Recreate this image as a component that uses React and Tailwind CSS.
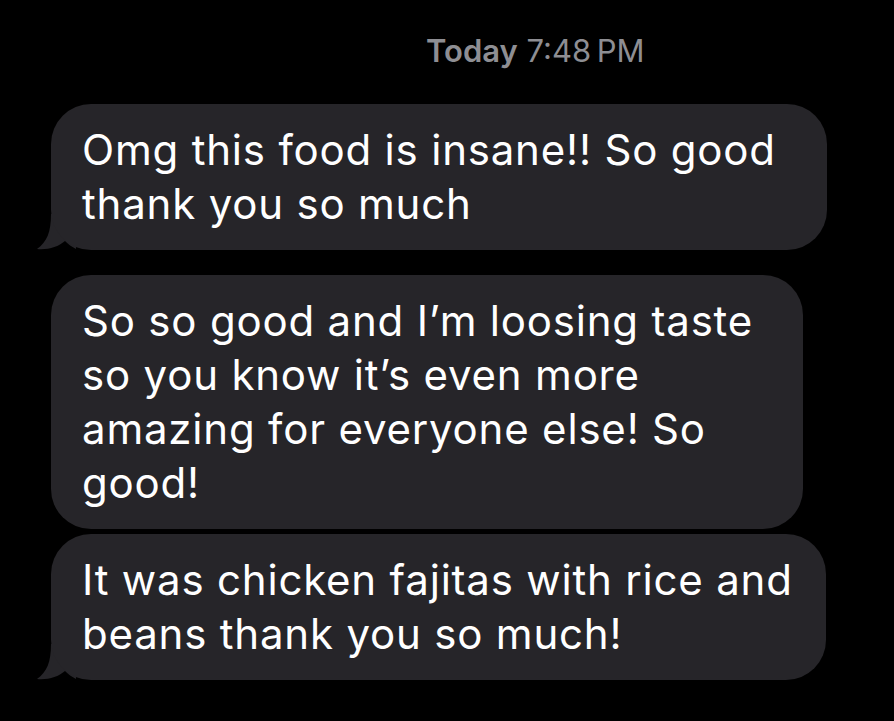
import React from "react";

const Tail = () => (
  <svg
    className="absolute left-[-15px] bottom-0"
    width="40"
    height="36"
    viewBox="0 0 40 36"
  >
    <path
      d="M15 0 C15 18 11 28 1 35 C12 36 22 33 29 27 C32 30 36 33 40 35 L40 0 Z"
      fill="#262529"
    />
  </svg>
);

const Bubble = ({ lines, width, tail }) => (
  <div className={`relative ${width}`}>
    <div className="relative z-10 rounded-[40px] bg-[#262529] pl-[31px] pr-6 pt-[19px] pb-[19px]">
      {lines.map((line, i) => (
        <p key={i} className="text-[42px] leading-[54px] text-white tracking-[0.8px] whitespace-nowrap">
          {line}
        </p>
      ))}
    </div>
    {tail && <Tail />}
  </div>
);

export default function App() {
  return (
    <div className="w-[894px] h-[721px] bg-black font-['Inter','Liberation_Sans',sans-serif] overflow-hidden">
      <div className="pl-[426px] pt-[32px] text-[31px] text-[#8e8e93] leading-[38px]">
        <span className="font-semibold">Today</span> 7:48&thinsp;PM
      </div>
      <div className="pl-[51px] pt-[34px] flex flex-col">
        <Bubble
          width="w-[776px]"
          tail
          lines={["Omg this food is insane!! So good", "thank you so much"]}
        />
        <div className="h-[25px]" />
        <Bubble
          width="w-[752px]"
          lines={[
            "So so good and I\u2019m loosing taste",
            "so you know it\u2019s even more",
            "amazing for everyone else! So",
            "good!",
          ]}
        />
        <div className="h-[5px]" />
        <Bubble
          width="w-[775px]"
          tail
          lines={["It was chicken fajitas with rice and", "beans thank you so much!"]}
        />
      </div>
    </div>
  );
}
